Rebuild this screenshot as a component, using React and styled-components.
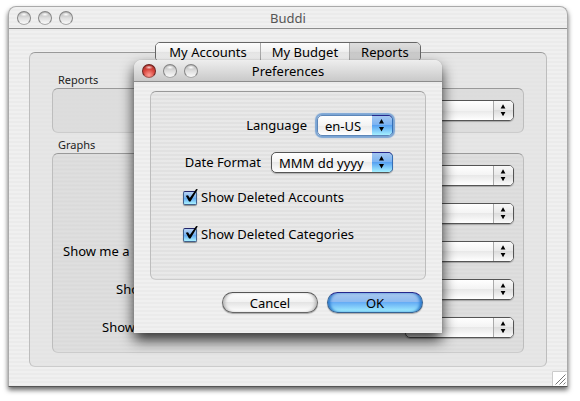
import React from 'react';
import styled, { createGlobalStyle, css } from 'styled-components';

const GlobalStyle = createGlobalStyle`
  * { box-sizing: border-box; }
  body {
    margin: 0;
    background: #fff;
    color: #000;
    font-family: 'Noto Sans', 'Open Sans', sans-serif;
    font-size: 13px;
    line-height: 16px;
  }
  button, select, input { font: inherit; color: inherit; margin: 0; }
  h1, h2 { margin: 0; font-weight: 400; }
`;

const pinstripes = css`
  background: repeating-linear-gradient(#f0f0f0 0 2px, #ebebeb 2px 4px);
`;

const Page = styled.div`
  padding: 6px 12px 13px 8px;
`;

const Window = styled.main`
  position: relative;
  ${pinstripes}
  border: 1px solid #aaa;
  border-bottom-color: #555;
  border-radius: 8px 8px 0 0;
  box-shadow: 0 3px 5px rgba(0, 0, 0, 0.6);
`;

const TitleBar = styled.header`
  display: grid;
  grid-template-columns: 1fr auto 1fr;
  align-items: center;
  height: 22px;
  padding: 0 8px;
  border-bottom: 1px solid #8c8c8c;
  border-radius: 7px 7px 0 0;
  color: ${(p) => (p.$active ? '#000' : '#555')};
  background: ${(p) =>
    p.$active ? 'linear-gradient(#eee, #dcdcdc 50%, #c9c9c9)' : 'transparent'};
`;

const Title = styled.h1`
  font-size: 13px;
  line-height: 20px;
`;

const Lights = styled.div`
  display: flex;
  gap: 7px;
`;

const Light = styled.button`
  width: 14px;
  height: 14px;
  padding: 0;
  border: 1px solid ${(p) => (p.$red ? '#6d2420' : '#858585')};
  border-bottom-color: ${(p) => (p.$red ? '#a05a55' : '#aaa')};
  border-radius: 50%;
  background: ${(p) =>
    p.$red
      ? 'radial-gradient(ellipse 4px 2px at 50% 20%, #f6cdca, transparent), radial-gradient(circle at 50% 85%, #ff9d94, #d9473f 50%, #9d2620)'
      : 'radial-gradient(ellipse 4px 2px at 50% 20%, #fff, transparent), linear-gradient(#b5b5b5, #dedede 50%, #fafafa)'};
`;

const Content = styled.div`
  padding: 13px 20px 19px;
`;

const Tabs = styled.nav`
  position: relative;
  display: flex;
  width: max-content;
  height: 20px;
  margin: 0 auto -10px;
  border: 1px solid #666;
  border-radius: 5px;
  overflow: hidden;
`;

const Tab = styled.button`
  padding: 0 ${(p) => p.$pad}px;
  border: 0;
  border-left: 1px solid #aaa;
  line-height: 18px;
  background: ${(p) =>
    p.$selected
      ? 'linear-gradient(#dedede, #cfcfcf 50%, #c8c8c8 50%, #dedede)'
      : 'linear-gradient(#fdfdfd, #efefef 50%, #e4e4e4 50%, #fff)'};
  &:first-child { border-left: 0; }
`;

const Panel = styled.section`
  border: 1px solid #bdbdbd;
  border-top-color: #999;
  border-bottom-color: #ccc;
  border-radius: 6px;
  background: repeating-linear-gradient(rgba(0, 0, 0, 0.03) 0 2px, rgba(0, 0, 0, 0.045) 2px 4px);
`;

const ReportPanel = styled(Panel)`
  padding: 19px 22px 13px;
`;

const GroupTitle = styled.h2`
  padding-left: 6px;
  font-size: 11px;
  line-height: 16px;
  color: #222;
`;

const Group = styled(Panel)`
  display: flex;
  flex-direction: column;
  gap: 17px;
  padding: 11px 9px ${(p) => (p.$tall ? 14 : 11)}px;
  margin-bottom: ${(p) => (p.$tall ? 0 : 4)}px;
`;

const Row = styled.div`
  display: flex;
  align-items: center;
  justify-content: flex-end;
  gap: 10px;
  height: 21px;
`;

const FieldLabel = styled.label`
  padding-bottom: 2px;
`;

const ReachLabel = styled(FieldLabel)`
  flex: 0 0 ${(p) => p.$reach}px;
  white-space: nowrap;
`;

const SelectBox = styled.div`
  position: relative;
  width: ${(p) => p.$width}px;
  height: 21px;
  border-radius: 5px;
  box-shadow: ${(p) =>
    p.$focused ? '0 0 1px 2px #7ba5d4' : '0 1px 1px rgba(0, 0, 0, 0.25)'};
`;

const SelectInput = styled.select`
  display: block;
  appearance: none;
  width: 100%;
  height: 100%;
  padding: 0 22px 0 7px;
  border: 1px solid ${(p) => (p.$focused ? '#5d86b8' : '#555')};
  border-radius: 5px;
  line-height: 18px;
  outline: 0;
  background: linear-gradient(#fff, #f3f3f3 50%, #e9e9e9 50%, #fff);
`;

const SelectArrows = styled.svg`
  position: absolute;
  top: 1px;
  right: 1px;
  width: 20px;
  height: 19px;
  border-radius: 0 4px 4px 0;
  pointer-events: none;
  border-left: ${(p) => (p.$blue ? 0 : '1px solid #aaa')};
  box-shadow: ${(p) => (p.$blue ? '0 -1px 0 #25278c, 1px 0 0 #356fb5' : 'none')};
  background: ${(p) =>
    p.$blue
      ? 'linear-gradient(#a3c6f0, #79b2f2 48%, #58a2f2 50%, #a4f0ff)'
      : 'linear-gradient(#f8f8f8, #e8e8e8 48%, #dcdcdc 50%, #fafafa)'};
`;

const Dialog = styled.section`
  position: absolute;
  top: 53px;
  left: 50%;
  width: 308px;
  margin-left: -154px;
  border-radius: 8px 8px 0 0;
  ${pinstripes}
  box-shadow: 0 0 1px #777, 0 7px 14px rgba(0, 0, 0, 0.8);
`;

const DialogBody = styled.form`
  padding: 9px 16px 20px;
`;

const Settings = styled(Panel)`
  display: flex;
  flex-direction: column;
  gap: 16px;
  padding: 23px 32px 36px;
`;

const Checks = styled.div`
  display: flex;
  flex-direction: column;
  gap: 20px;
`;

const CheckLabel = styled.label`
  position: relative;
  display: flex;
  align-items: center;
  gap: 4px;
  height: 17px;
`;

const CheckText = styled.span`
  padding-bottom: 2px;
`;

const CheckInput = styled.input`
  appearance: none;
  width: 14px;
  height: 14px;
  border: 1px solid #41618d;
  border-top-color: #22246a;
  border-radius: 2px;
  background: linear-gradient(#b7d3f4, #77b2f1 50%, #62a9f2 52%, #a9f1ff);
  box-shadow: 0 1px 1px rgba(0, 0, 0, 0.4);
`;

const Tick = styled.svg`
  position: absolute;
  left: 0;
  top: 0;
  width: 16px;
  height: 16px;
  pointer-events: none;
`;

const Actions = styled.footer`
  display: flex;
  justify-content: flex-end;
  gap: 9px;
  margin-top: 12px;
  padding-right: 3px;
`;

const ActionButton = styled.button`
  width: 96px;
  height: 21px;
  padding: 0;
  border: 1px solid ${(p) => (p.$primary ? '#356293' : '#666')};
  border-top-color: ${(p) => (p.$primary ? '#25278c' : '#555')};
  border-radius: 11px;
  line-height: 18px;
  background: ${(p) =>
    p.$primary
      ? 'linear-gradient(#a9c9ef, #8dbaf0 46%, #66adf5 50%, #a2f0ff)'
      : 'linear-gradient(#fff, #f2f2f2 46%, #e4e4e4 50%, #fff)'};
  box-shadow: ${(p) =>
    p.$primary
      ? 'inset 3px 0 3px -1px #2877cb, inset -3px 0 3px -1px #2877cb, 0 1px 1px rgba(0, 0, 0, 0.3)'
      : 'inset 3px 0 3px -1px #bbb, inset -3px 0 3px -1px #bbb, 0 1px 1px rgba(0, 0, 0, 0.3)'};
`;

const Grip = styled.svg`
  position: absolute;
  right: 0;
  bottom: 0;
  width: 15px;
  height: 15px;
`;

function WindowBar({ title, active }) {
  return (
    <TitleBar $active={active}>
      <Lights>
        <Light type="button" aria-label="Close" $red={active} />
        <Light type="button" aria-label="Minimize" />
        <Light type="button" aria-label="Zoom" />
      </Lights>
      <Title>{title}</Title>
    </TitleBar>
  );
}

function Select({ id, label, width = 109, blue, focused, options = [] }) {
  return (
    <SelectBox $width={width} $focused={focused}>
      <SelectInput id={id} aria-label={label} $focused={focused}>
        {options.map((o) => (
          <option key={o}>{o}</option>
        ))}
      </SelectInput>
      <SelectArrows $blue={blue} viewBox="0 0 20 19" aria-hidden="true">
        <path d="M9.5 3 12 7.5H7zM9.5 15.5 7 11h5z" fill="#000" />
      </SelectArrows>
    </SelectBox>
  );
}

function Check({ children }) {
  return (
    <CheckLabel>
      <CheckInput type="checkbox" defaultChecked />
      <CheckText>{children}</CheckText>
      <Tick viewBox="0 0 16 16" aria-hidden="true">
        <path d="M2.8 6.8 5 6.2 6.8 9 13.2 0 14.8.3 7.5 12.4H6z" fill="#000" />
      </Tick>
    </CheckLabel>
  );
}

const graphRows = [
  { id: 'graph-1' },
  { id: 'graph-2' },
  { id: 'graph-3', text: 'Show me a', reach: 332 },
  { id: 'graph-4', text: 'Show', reach: 279 },
  { id: 'graph-5', text: 'Show', reach: 293 },
];

export default function App() {
  return (
    <Page>
      <GlobalStyle />
      <Window>
        <WindowBar title="Buddi" />
        <Content>
          <Tabs>
            <Tab type="button" $pad={13}>My Accounts</Tab>
            <Tab type="button" $pad={11}>My Budget</Tab>
            <Tab type="button" $pad={11} $selected>Reports</Tab>
          </Tabs>
          <ReportPanel>
            <GroupTitle>Reports</GroupTitle>
            <Group>
              <Row>
                <Select id="report" label="Reports" />
              </Row>
            </Group>
            <GroupTitle>Graphs</GroupTitle>
            <Group $tall>
              {graphRows.map((row) => (
                <Row key={row.id}>
                  {row.text && (
                    <ReachLabel htmlFor={row.id} $reach={row.reach}>{row.text}</ReachLabel>
                  )}
                  <Select id={row.id} label={row.text ? undefined : 'Graphs'} />
                </Row>
              ))}
            </Group>
          </ReportPanel>
        </Content>
        <Grip viewBox="0 0 15 15" aria-hidden="true">
          <path d="M0 0h15v15H0z" fill="#fff" />
          <path d="M.5 15V.5H15" fill="none" stroke="#ccc" />
          <path d="M3.5 13.5 13.5 3.5M7.5 13.5l6-6M11.5 13.5l2-2" stroke="#777" />
        </Grip>
        <Dialog role="dialog" aria-label="Preferences">
          <WindowBar title="Preferences" active />
          <DialogBody>
            <Settings as="div">
              <Row>
                <FieldLabel htmlFor="language">Language</FieldLabel>
                <Select id="language" width={76} blue focused options={['en-US']} />
              </Row>
              <Row>
                <FieldLabel htmlFor="date-format">Date Format</FieldLabel>
                <Select id="date-format" width={122} blue options={['MMM dd yyyy']} />
              </Row>
              <Checks>
                <Check>Show Deleted Accounts</Check>
                <Check>Show Deleted Categories</Check>
              </Checks>
            </Settings>
            <Actions>
              <ActionButton type="button">Cancel</ActionButton>
              <ActionButton type="button" $primary>OK</ActionButton>
            </Actions>
          </DialogBody>
        </Dialog>
      </Window>
    </Page>
  );
}
